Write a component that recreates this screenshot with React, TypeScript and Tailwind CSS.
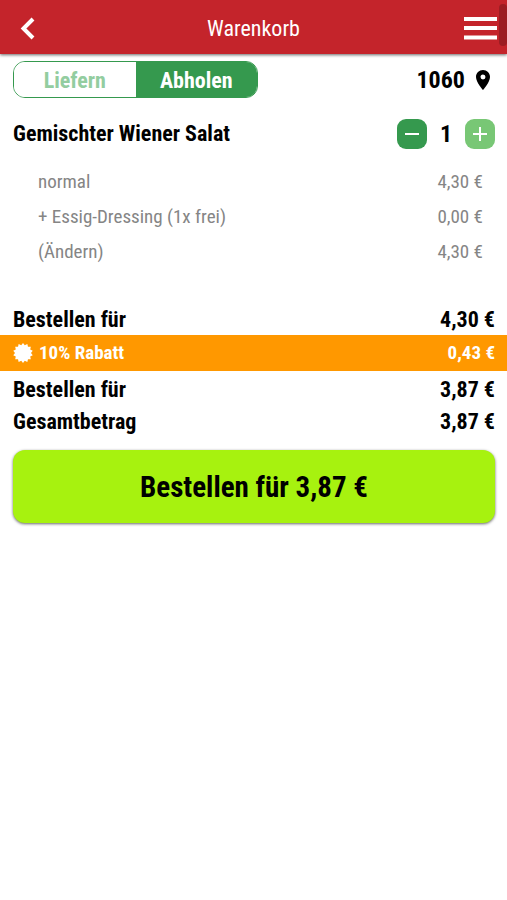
import { useState } from 'react';
import { MdLocationOn } from 'react-icons/md';

const extras = [
  { label: 'normal', price: '4,30 €' },
  { label: '+ Essig-Dressing (1x frei)', price: '0,00 €' },
];

function SumRow({ label, value }: { label: string; value: string }) {
  return (
    <div className="flex h-8 items-center justify-between pr-3 pl-[13px] text-[22px] font-bold">
      <span>{label}</span>
      <span>{value}</span>
    </div>
  );
}

function Badge() {
  // 14-pointed seal
  const points = Array.from({ length: 28 }, (_, i) => {
    const r = i % 2 ? 8 : 10;
    const a = (i * Math.PI) / 14;
    return `${10 + r * Math.sin(a)},${10 - r * Math.cos(a)}`;
  }).join(' ');
  return (
    <svg viewBox="0 0 20 20" className="size-5" fill="currentColor" aria-hidden="true">
      <polygon points={points} />
    </svg>
  );
}

export default function App() {
  const [pickup, setPickup] = useState(true);
  const [count, setCount] = useState(1);

  return (
    <div className="min-h-screen bg-white font-['Roboto_Condensed',Roboto,sans-serif] text-black">
      <header className="relative grid h-[54px] grid-cols-[1fr_auto_1fr] items-center bg-[#c4242b] px-[10px] pt-1 text-white shadow-[0_1px_3px_rgba(0,0,0,0.6)]">
        <button type="button" aria-label="Zurück" className="justify-self-start px-[10px]">
          <svg viewBox="0 0 16 24" className="h-6 w-4" fill="none" stroke="currentColor" strokeWidth="4" aria-hidden="true">
            <path d="M13 2 3.5 11.5 13 21" />
          </svg>
        </button>
        <h1 className="text-[22px] leading-7">Warenkorb</h1>
        <button type="button" aria-label="Menü" className="justify-self-end">
          <svg viewBox="0 0 33 24" className="h-6 w-[33px]" fill="currentColor" aria-hidden="true">
            <path d="M0 0h33v4H0zM0 9h33v4H0zM0 18.5h33v4H0z" />
          </svg>
        </button>
        <div className="absolute top-1 right-0 h-[42px] w-2 rounded-sm bg-[#9c1d23]" />
      </header>

      <main>
        <div className="flex items-center justify-between pt-[7px] pr-3 pl-[13px]">
          <div className="flex h-[37px] w-[245px] overflow-hidden rounded-xl border border-[#35994e] text-[22px] font-bold">
            <button
              type="button"
              aria-pressed={!pickup}
              onClick={() => setPickup(false)}
              className={pickup ? 'flex-1 bg-white pt-[2px] text-[#93cda0]' : 'flex-1 bg-[#35994e] pt-[2px] text-white'}
            >
              Liefern
            </button>
            <button
              type="button"
              aria-pressed={pickup}
              onClick={() => setPickup(true)}
              className={pickup ? 'flex-1 bg-[#35994e] pt-[2px] text-white' : 'flex-1 bg-white pt-[2px] text-[#93cda0]'}
            >
              Abholen
            </button>
          </div>
          <a href="#standort" className="flex items-center gap-[6px] text-2xl font-bold">
            1060
            <MdLocationOn className="size-6" aria-hidden="true" />
          </a>
        </div>

        <section className="pt-[21px]">
          <div className="flex items-center justify-between pr-3 pl-[13px]">
            <h2 className="text-[22px] leading-7 font-bold">Gemischter Wiener Salat</h2>
            <div className="flex items-center">
              <button
                type="button"
                aria-label="Weniger"
                onClick={() => setCount(Math.max(0, count - 1))}
                className="grid size-[30px] place-items-center rounded-[9px] bg-[#35994e] text-white"
              >
                <svg viewBox="0 0 14 14" className="size-[14px]" stroke="currentColor" strokeWidth="2" aria-hidden="true">
                  <path d="M0 7h14" />
                </svg>
              </button>
              <span className="w-[38px] text-center text-2xl leading-7 font-bold">{count}</span>
              <button
                type="button"
                aria-label="Mehr"
                onClick={() => setCount(count + 1)}
                className="grid size-[30px] place-items-center rounded-[9px] bg-[#78c775] text-white"
              >
                <svg viewBox="0 0 14 14" className="size-[14px]" stroke="currentColor" strokeWidth="2" aria-hidden="true">
                  <path d="M0 7h14M7 0v14" />
                </svg>
              </button>
            </div>
          </div>

          <ul className="pt-4 pr-6 pl-[38px] text-[19px] text-[#858585]">
            {extras.map((e) => (
              <li key={e.label} className="flex h-[35px] items-center justify-between">
                <span>{e.label}</span>
                <span>{e.price}</span>
              </li>
            ))}
            <li className="flex h-[35px] items-center justify-between">
              <a href="#aendern">(Ändern)</a>
              <span>4,30 €</span>
            </li>
          </ul>
        </section>

        <section className="pt-[33px]">
          <SumRow label="Bestellen für" value="4,30 €" />
          <div className="flex h-9 items-center justify-between bg-[#ff9800] pr-3 pl-[13px] text-[19px] font-bold text-white">
            <span className="flex items-center gap-[6px]">
              <Badge />
              10% Rabatt
            </span>
            <span>0,43 €</span>
          </div>
          <div className="pt-[2px]">
            <SumRow label="Bestellen für" value="3,87 €" />
            <SumRow label="Gesamtbetrag" value="3,87 €" />
          </div>
        </section>

        <div className="pt-[13px] pr-3 pl-[13px]">
          <button
            type="button"
            className="h-[73px] w-full rounded-xl bg-[#a7f20f] pt-[2px] text-[29px] font-bold shadow-[0_1px_3px_rgba(0,0,0,0.6)]"
          >
            Bestellen für 3,87 €
          </button>
        </div>
      </main>
    </div>
  );
}
